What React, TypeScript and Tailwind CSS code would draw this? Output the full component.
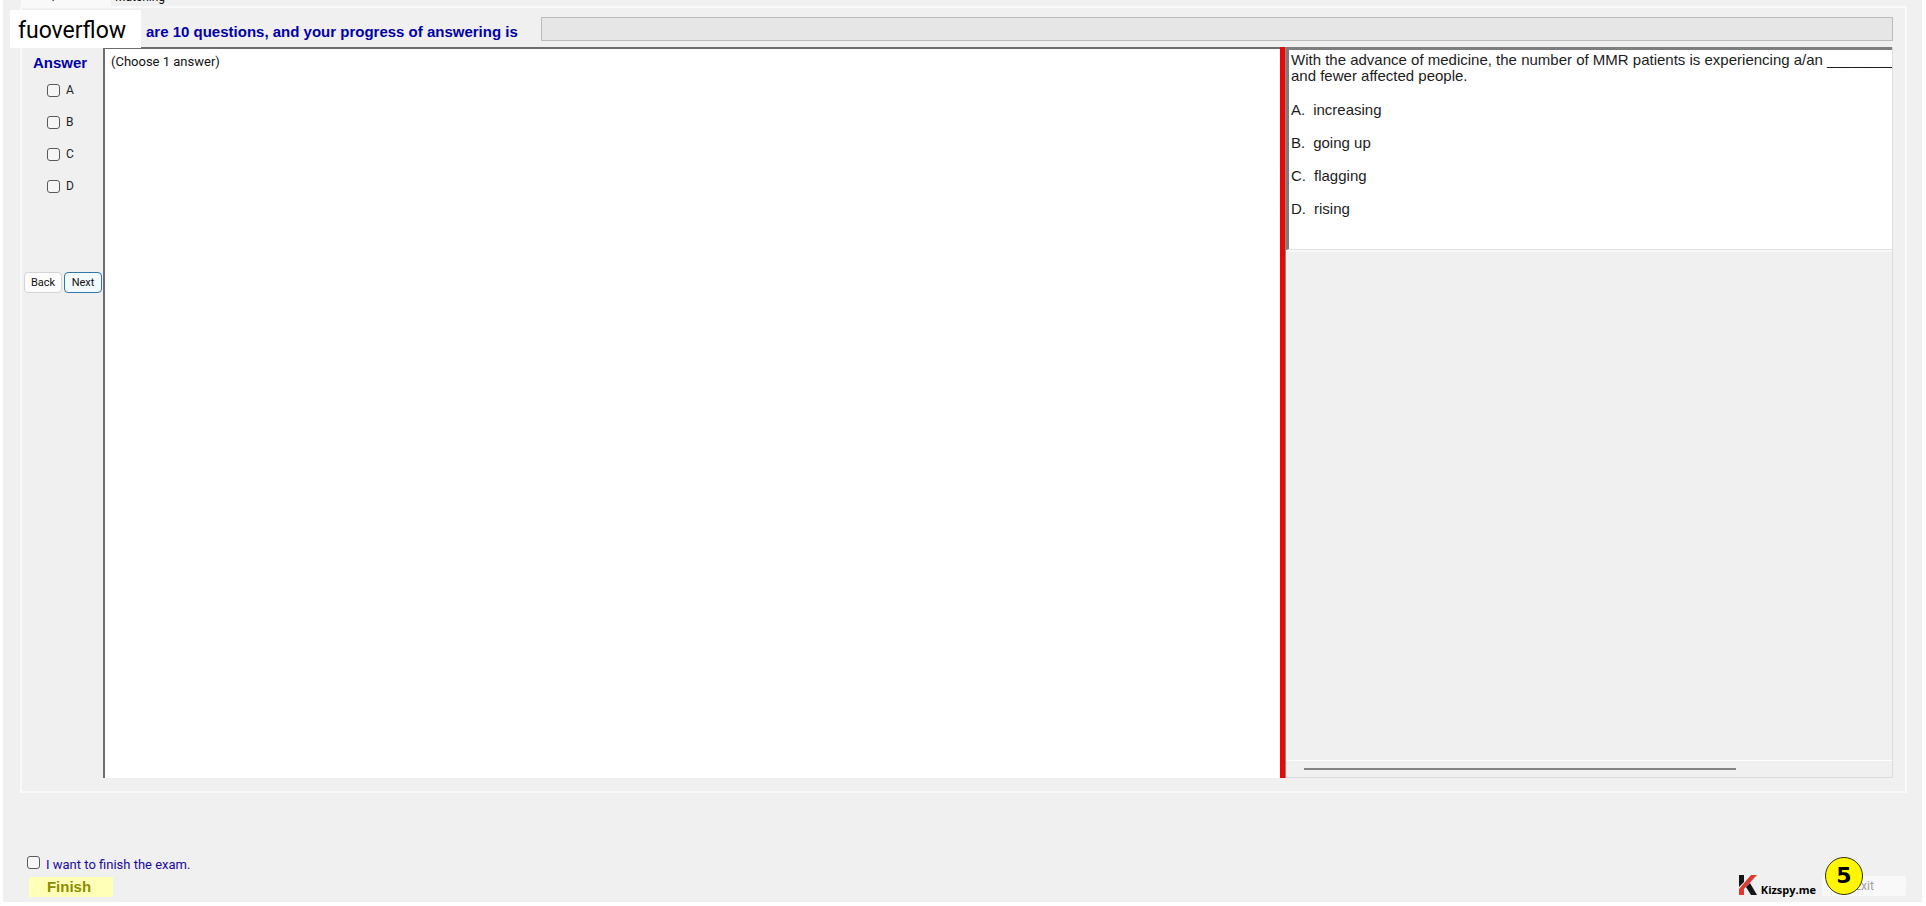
import { useState } from "react";

const answers = ["A", "B", "C", "D"];

const choices = [
  { letter: "A", text: "increasing" },
  { letter: "B", text: "going up" },
  { letter: "C", text: "flagging" },
  { letter: "D", text: "rising" }
];

const checkboxClass =
  "size-[13px] shrink-0 appearance-none rounded-[3px] border border-[#5a5a5a] bg-[#f6f6f6] checked:bg-[#0067c0]";

function TabStrip() {
  return (
    <div className="flex h-[6px] items-end overflow-hidden pl-[18px] text-[12px] leading-[14px]">
      <button className="w-[90px] bg-[#f9f9f9] pb-[5px] pl-1 text-left" type="button">
        Multiple
      </button>
      <button className="pb-[2px] pl-1" type="button">
        Matching
      </button>
    </div>
  );
}

function AnswerColumn() {
  const [selected, setSelected] = useState<string[]>([]);

  const toggle = (letter: string) =>
    setSelected(selected.includes(letter) ? selected.filter((item) => item !== letter) : [...selected, letter]);

  return (
    <aside className="flex w-[81px] shrink-0 flex-col">
      <h2 className="mt-2 pl-[11px] font-['Liberation_Sans',sans-serif] text-[15px] leading-4 font-bold text-[#0000a8]">Answer</h2>
      <div className="mt-[11px] flex flex-col gap-4 pl-[25px]">
        {answers.map((letter) => (
          <label key={letter} className="flex h-4 items-center gap-[6px] text-[12px] leading-4 text-[#222]">
            <input className={checkboxClass} type="checkbox" checked={selected.includes(letter)} onChange={() => toggle(letter)} />
            {letter}
          </label>
        ))}
      </div>
      <div className="mt-[78px] flex gap-[2px] pl-[2px] text-[11px] leading-4">
        <button className="h-[21px] w-[38px] rounded-[4px] border border-[#d4d4d4] bg-[#fcfcfc]" type="button">
          Back
        </button>
        <button className="h-[21px] w-[38px] rounded-[4px] border border-[#2f78a8] bg-[#f2fafe]" type="button">
          Next
        </button>
      </div>
    </aside>
  );
}

function QuestionPanel() {
  return (
    <section className="flex w-[607px] shrink-0 flex-col border-r border-[#dcdcdc] font-['Liberation_Sans',Arial,sans-serif]">
      <div className="h-[203px] overflow-hidden border-t-[3px] border-b border-l-[3px] border-t-[#7c7f7d] border-b-[#e0e0e0] border-l-[#7c7c7c] bg-white pt-[2px] pl-[2px] text-[15px] leading-4 whitespace-nowrap text-[#1c1c1c]">
        <p>
          With the advance of medicine, the number of MMR patients is experiencing a/an ______________
          <br />
          and fewer affected people.
        </p>
        <ul className="mt-[18px] flex flex-col gap-[17px]">
          {choices.map((choice) => (
            <li key={choice.letter} className="flex gap-2">
              <span>{choice.letter}.</span>
              <span>{choice.text}</span>
            </li>
          ))}
        </ul>
      </div>
      <div className="flex-1 border-t-2 border-l border-t-[#f8f8f8] border-l-[#f8f8f8]" />
      <div className="flex h-[18px] items-center border-t border-b border-t-white border-b-[#dcdcdc] pl-[18px]">
        <div className="h-[2px] w-[432px] bg-[#858585]" />
      </div>
    </section>
  );
}

function KizspyLogo() {
  return (
    <div className="flex items-end gap-1">
      <svg className="mb-[2px] h-5 w-[18px]" viewBox="0 0 18 20" aria-hidden="true">
        <path d="M0 0h5v7L0 12z" fill="#161616" />
        <path d="M12 0h6L5 14v6H0v-6z" fill="#e0392f" />
        <path d="M7 12l4-4 7 12h-6z" fill="#161616" />
      </svg>
      <span className="font-['Open_Sans',sans-serif] text-[11px] leading-[14px] font-bold text-black">Kizspy.me</span>
    </div>
  );
}

export default function App() {
  const [finish, setFinish] = useState(false);

  return (
    <div className="flex min-h-screen flex-col bg-white pr-1 pb-1 pl-[3px] font-[Roboto,sans-serif] text-[#111]">
      <div className="relative flex flex-1 flex-col bg-[#f0f0f0]">
        <TabStrip />

        <main className="mr-[15px] ml-[17px] flex flex-1 flex-col border-2 border-[#f9f9f9] pr-3 pb-[13px]">
          <header className="flex h-[39px] items-start pt-[9px]">
            <h1 className="ml-[124px] w-[395px] shrink-0 pt-[7px] font-['Liberation_Sans',sans-serif] text-[15px] leading-4 font-bold whitespace-nowrap text-[#0000a8]">
              are 10 questions, and your progress of answering is
            </h1>
            <div className="h-6 flex-1 border border-[#bcbcbc] bg-[#e6e6e6]" role="progressbar" aria-valuenow={0} aria-label="Progress" />
          </header>

          <div className="flex flex-1">
            <AnswerColumn />
            <section className="flex-1 border-t-2 border-l-2 border-[#6d6d6d] bg-white pt-[5px] pl-[6px] text-[13px] leading-4">
              (Choose 1 answer)
            </section>
            <div className="w-[6px] shrink-0 border-r border-[#a08078] bg-[#e80808]" />
            <QuestionPanel />
          </div>
        </main>

        <footer className="flex h-[109px] items-end justify-between pr-4 pb-[5px] pl-6">
          <div className="flex flex-col gap-[3px]">
            <label className="flex items-start gap-[6px] text-[13px] leading-[18px] text-[#1a0a9c]">
              <input className={checkboxClass} type="checkbox" checked={finish} onChange={(event) => setFinish(event.target.checked)} />
              I want to finish the exam.
            </label>
            <button className="ml-[2px] h-5 w-[84px] bg-[#ffffb8] pr-1 font-['Liberation_Sans',sans-serif] text-[15px] leading-4 font-bold text-[#8c8c00]" type="button">
              Finish
            </button>
          </div>

          <div className="flex items-end gap-[6px]">
            <KizspyLogo />
            <div className="relative">
              <button className="h-5 w-[84px] rounded-[2px] bg-[#f9f9f9] text-[12px] leading-4 text-[#a0a0a0]" type="button">
                Exit
              </button>
              <span className="absolute bottom-[2px] left-[3px] flex size-[38px] items-center justify-center rounded-full border border-[#33330a] bg-[#fff600] font-['DejaVu_Sans',sans-serif] text-[22px] leading-none font-bold text-black">
                5
              </span>
            </div>
          </div>
        </footer>

        <div className="absolute top-[10px] left-[7px] flex h-[38px] w-[131px] items-center bg-white pt-1 pl-2 text-[23px] leading-7 text-black">
          fuoverflow
        </div>
      </div>
    </div>
  );
}
